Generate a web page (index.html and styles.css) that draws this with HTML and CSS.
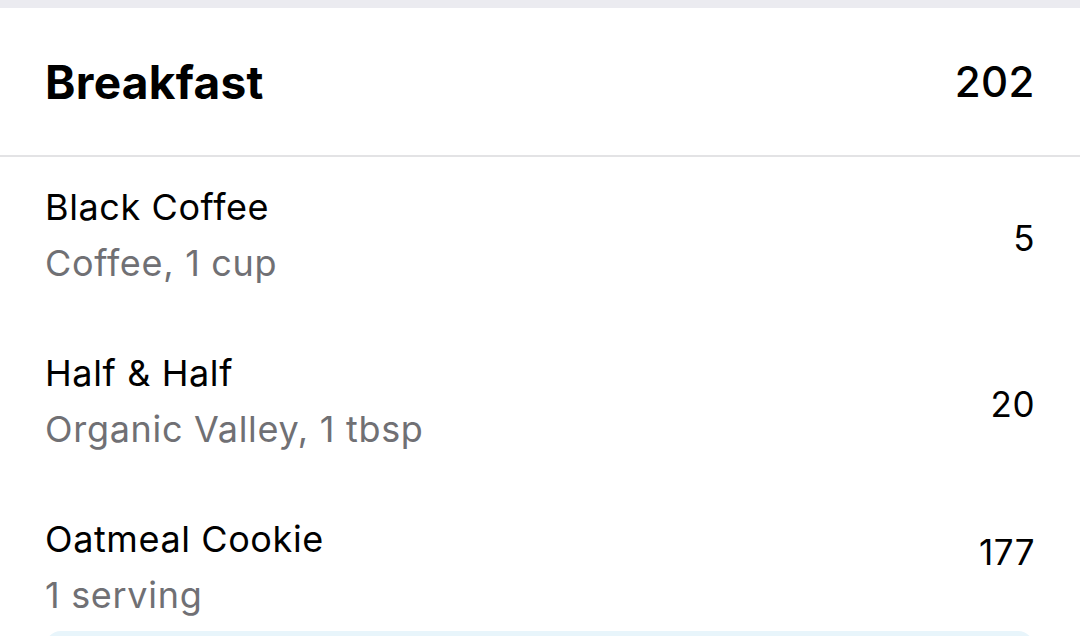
FILE: index.html
```html
<!DOCTYPE html>
<html>
<head>
<meta charset="utf-8">
<link rel="stylesheet" href="styles.css">
</head>
<body>
<div class="topbar"></div>
<section class="meal">
  <header class="meal-header">
    <h2 class="meal-title">Breakfast</h2>
    <span class="meal-total">202</span>
  </header>
  <ul class="food-list">
    <li class="food-row">
      <div class="food-info">
        <div class="food-name">Black Coffee</div>
        <div class="food-detail">Coffee, 1 cup</div>
      </div>
      <span class="food-cal">5</span>
    </li>
    <li class="food-row">
      <div class="food-info">
        <div class="food-name">Half &amp; Half</div>
        <div class="food-detail">Organic Valley, 1 tbsp</div>
      </div>
      <span class="food-cal">20</span>
    </li>
    <li class="food-row food-row-last">
      <div class="food-info">
        <div class="food-name">Oatmeal Cookie</div>
        <div class="food-detail">1 serving</div>
      </div>
      <span class="food-cal food-cal-top">177</span>
    </li>
  </ul>
  <div class="add-bar"></div>
</section>
</body>
</html>
```

FILE: styles.css
```css
* { box-sizing: border-box; }
html, body {
  margin: 0;
  padding: 0;
  background: #ffffff;
  width: 1080px;
  height: 636px;
  overflow: hidden;
  font-family: Inter, "Liberation Sans", sans-serif;
  color: #000;
}
.topbar {
  height: 8px;
  background: #ebebf0;
}
.meal {
  background: #fff;
}
.meal-header {
  height: 149px;
  display: flex;
  align-items: center;
  justify-content: space-between;
  padding: 0 45px 0 45px;
  border-bottom: 2px solid #e3e3e5;
}
.meal-title {
  margin: 0;
  font-size: 46px;
  font-weight: 700;
  letter-spacing: 0.3px;
}
.meal-total {
  font-size: 42px;
  font-weight: 500;
  letter-spacing: 0.5px;
}
.food-list {
  list-style: none;
  margin: 0;
  padding: 0 45px 0 45px;
}
.food-row {
  display: flex;
  align-items: center;
  justify-content: space-between;
  height: 166px;
  padding-bottom: 5px;
}
.food-info {
  margin-bottom: 5px;
}
.food-row-last {
  align-items: flex-start;
  height: 142px;
  padding-top: 22px;
  padding-bottom: 0;
}
.food-row-last .food-info {
  margin-bottom: 0;
}
.food-name {
  font-size: 36px;
  line-height: 56px;
  letter-spacing: 0.6px;
}
.food-detail {
  font-size: 36px;
  line-height: 56px;
  color: #707074;
  letter-spacing: 0.7px;
}
.food-cal {
  font-size: 35px;
  letter-spacing: 0.5px;
}
.food-cal-top {
  margin-top: 20px;
}
.add-bar {
  margin: 0 46px 0 45px;
  height: 40px;
  background: #e8f5fb;
  border-radius: 16px;
}
```
